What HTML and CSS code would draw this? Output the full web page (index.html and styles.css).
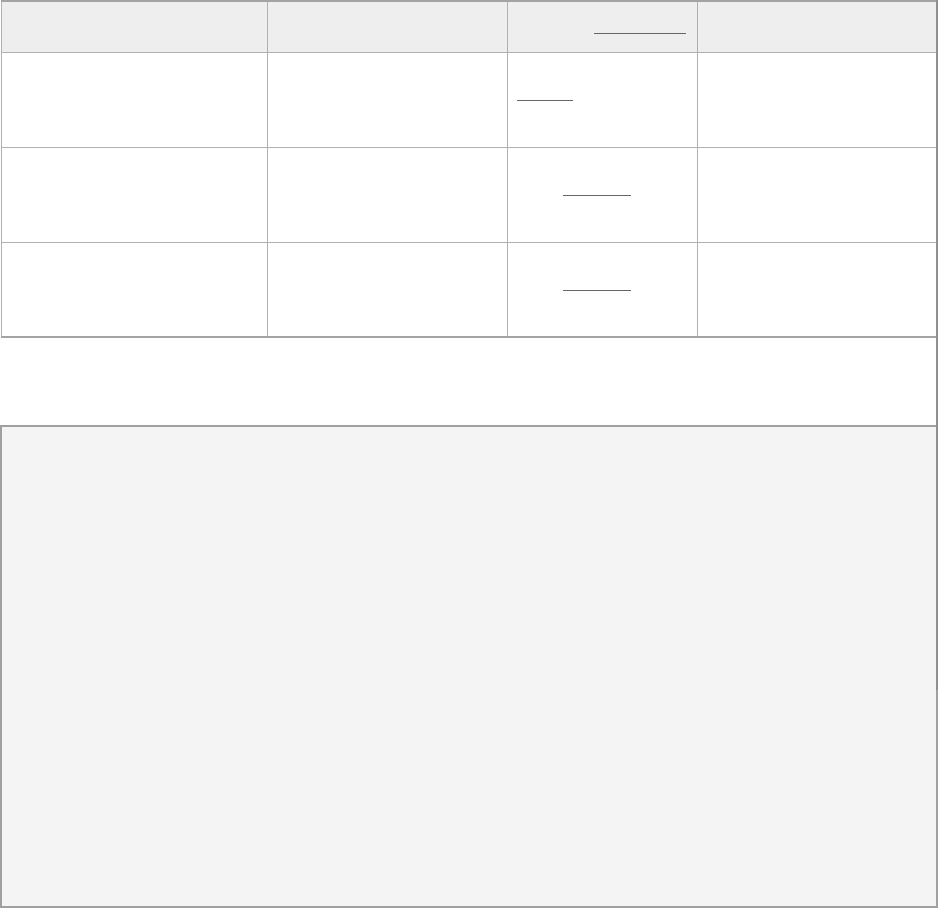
FILE: index.html
```html
<!DOCTYPE html>
<html>
<head>
<meta charset="utf-8">
<link rel="stylesheet" href="styles.css">
</head>
<body>
<div class="page">
  <table class="grid">
    <thead>
      <tr class="head-row">
        <th class="c1"></th>
        <th class="c2"></th>
        <th class="c3 head-link"><span class="line w92"></span></th>
        <th class="c4"></th>
      </tr>
    </thead>
    <tbody>
      <tr class="row">
        <td></td>
        <td></td>
        <td class="left-link"><span class="line w56"></span></td>
        <td></td>
      </tr>
      <tr class="row">
        <td></td>
        <td></td>
        <td class="mid-link"><span class="line w68"></span></td>
        <td></td>
      </tr>
      <tr class="row">
        <td></td>
        <td></td>
        <td class="mid-link"><span class="line w68"></span></td>
        <td></td>
      </tr>
    </tbody>
  </table>
  <div class="panel"></div>
</div>
<div class="scroll-thumb"></div>
</body>
</html>
```

FILE: styles.css
```css
html, body {
  margin: 0;
  padding: 0;
  background: #ffffff;
  font-family: "Liberation Sans", Arial, sans-serif;
}

.page {
  display: flex;
  flex-direction: column;
  width: 938px;
}

.grid {
  border-collapse: collapse;
  width: 937px;
  margin-left: 1px;
  border-top: 2px solid #a3a3a3;
  border-right: 2px solid #a3a3a3;
  border-bottom: 2px solid #a3a3a3;
  border-left: 1px solid #a3a3a3;
  table-layout: fixed;
}

.grid th,
.grid td {
  border: 1px solid #b0b0b0;
  padding: 0;
}

.c1 { width: 265px; }
.c2 { width: 238px; }
.c3 { width: 178px; }
.c4 { width: 238px; }

.head-row {
  height: 51px;
  background: #eeeeee;
}

.row {
  height: 95px;
}

.line {
  display: inline-block;
  height: 0;
  border-bottom: 1px solid #666666;
  vertical-align: middle;
}

.w92 { width: 92px; }
.w56 { width: 56px; }
.w68 { width: 68px; }

.head-link {
  text-align: right;
  vertical-align: bottom;
  padding: 0 11px 10px 0 !important;
}

.left-link {
  text-align: left;
  vertical-align: middle;
  padding-left: 9px !important;
}

.mid-link {
  text-align: left;
  vertical-align: middle;
  padding-left: 55px !important;
}

.panel {
  margin-top: 87px;
  height: 479px;
  width: 934px;
  background: #f4f4f4;
  border: 2px solid #a0a0a0;
}

.scroll-thumb {
  position: fixed;
  top: 0;
  right: 0;
  width: 2px;
  height: 690px;
  background: #8f8f8f;
}
```
